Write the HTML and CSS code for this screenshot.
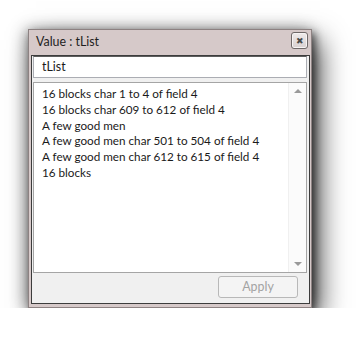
FILE: index.html
```html
<!DOCTYPE html>
<html>
<head lang="en">
    <meta charset="UTF-8">
    <title>Value : tList</title>
    <link rel="stylesheet" href="styles.css">
</head>
<body>
<div class="stage">
    <div class="win">
        <div class="win-title">
            <span class="win-caption">Value : tList</span>
            <a class="win-close" href="javascript:void(0);">&#x2716;</a>
        </div>
        <div class="win-body">
            <div class="name-input">tList</div>
            <div class="list-box">
                <div class="list-lines">
                    <div>16 blocks char 1 to 4 of field 4</div>
                    <div>16 blocks char 609 to 612 of field 4</div>
                    <div>A few good men</div>
                    <div>A few good men char 501 to 504 of field 4</div>
                    <div>A few good men char 612 to 615 of field 4</div>
                    <div>16 blocks</div>
                </div>
                <!-- 滚动条 -->
                <div class="scroll-bar">
                    <span class="arrow-up"></span>
                    <span class="arrow-down"></span>
                </div>
            </div>
            <div class="win-foot">
                <a class="apply-btn" href="javascript:void(0);">Apply</a>
            </div>
        </div>
    </div>
</div>
</body>
</html>
```

FILE: styles.css
```css
html, body {
    margin: 0px;
    padding: 0px;
    background: #ffffff;
}
body {
    font-family: Lato, "Noto Sans", sans-serif;
    font-size: 11.7px;
    color: #1a1a1a;
}
a {
    text-decoration: none;
}
.stage {
    padding: 29px 0px 0px 28px;
}
.win {
    width: 284px;
    height: 279px;
    box-sizing: border-box;
    border: 1px solid #8d8282;
    background: #d6c9c9;
    padding: 0px 1px 3px 2px;
    box-shadow: 3px 4px 8px rgba(0, 0, 0, 0.55), 8px 11px 26px rgba(0, 0, 0, 0.7), -3px 0px 14px rgba(0, 0, 0, 0.3);
    display: flex;
    flex-direction: column;
}
.win-title {
    height: 25px;
    display: flex;
    align-items: center;
    justify-content: space-between;
    padding: 0px 2px 0px 5px;
}
.win-caption {
    font-size: 12.4px;
    color: #1e1e1e;
    margin-top: -2px;
}
.win-close {
    width: 17px;
    height: 17px;
    box-sizing: border-box;
    border: 1px solid #6f6868;
    border-radius: 3px;
    background: linear-gradient(#efeaea, #d9d1d1);
    color: #4a4a4a;
    font-size: 9px;
    line-height: 15px;
    text-align: center;
    margin-top: -4px;
    box-shadow: inset 0px 0px 0px 1px #f7f4f4;
}
.win-body {
    flex: 1;
    border: 1px solid #3c3c3c;
    background: #f0f0f0;
    display: flex;
    flex-direction: column;
    padding: 0px 2px 0px 1px;
}
.name-input {
    height: 22px;
    box-sizing: border-box;
    border: 1px solid #abadb3;
    border-top-color: #5d5d5d;
    background: #ffffff;
    padding-left: 8px;
    line-height: 20px;
    font-size: 12.4px;
}
.list-box {
    margin-top: 4px;
    height: 191px;
    box-sizing: border-box;
    border: 1px solid #a5a5a5;
    background: #ffffff;
    display: flex;
}
.list-lines {
    flex: 1;
    padding: 3px 0px 0px 8px;
    line-height: 15.8px;
}
.scroll-bar {
    width: 17px;
    border-left: 1px solid #f0f0f0;
    background: #fbfbfb;
    display: flex;
    flex-direction: column;
    justify-content: space-between;
    align-items: center;
    padding: 6px 0px 6px 0px;
}
.arrow-up {
    width: 0px;
    height: 0px;
    border-left: 4px solid transparent;
    border-right: 4px solid transparent;
    border-bottom: 4px solid #9a9a9a;
}
.arrow-down {
    width: 0px;
    height: 0px;
    border-left: 4px solid transparent;
    border-right: 4px solid transparent;
    border-top: 4px solid #9a9a9a;
}
.win-foot {
    flex: 1;
    display: flex;
    justify-content: flex-end;
    align-items: flex-start;
    padding: 3px 9px 0px 0px;
}
.apply-btn {
    width: 80px;
    height: 22px;
    box-sizing: border-box;
    border: 1px solid #b8b8b8;
    border-radius: 3px;
    background: #f4f4f4;
    color: #a3a3a3;
    text-align: center;
    line-height: 20px;
    font-size: 12.4px;
}
```
